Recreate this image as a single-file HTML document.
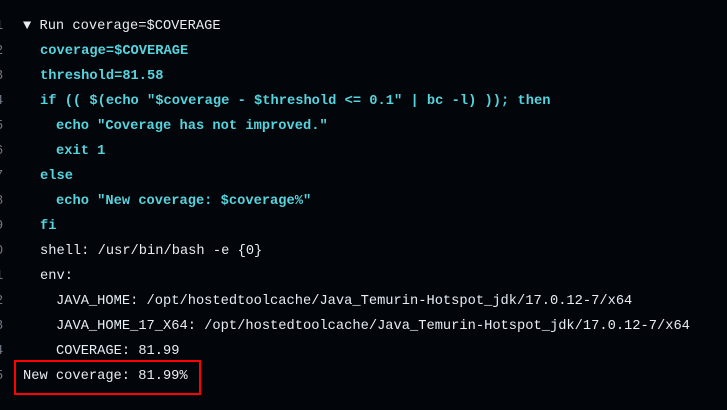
<html><head><style>
body{margin:0;width:727px;height:410px;background:#02050a;overflow:hidden;font-family:"Liberation Mono",monospace;font-size:13.72px;color:#e6edf3;position:relative}
.l{position:absolute;left:0;height:25px;line-height:25px;white-space:pre}
.n{position:absolute;left:-5px;color:#6e7681;width:10px}
.t{position:absolute}
.c{color:#56d4dd;font-weight:bold}
.box{position:absolute;left:14px;top:360px;width:183px;height:31px;border:2px solid #ff0000}
</style></head><body>
<div class="l" style="top:14px"><span class="n">1</span><span class="t" style="left:23px">▼ Run coverage=$COVERAGE</span></div>
<div class="l" style="top:39px"><span class="n">2</span><span class="t c" style="left:40px">coverage=$COVERAGE</span></div>
<div class="l" style="top:64px"><span class="n">3</span><span class="t c" style="left:40px">threshold=81.58</span></div>
<div class="l" style="top:89px"><span class="n">4</span><span class="t c" style="left:40px">if (( $(echo "$coverage - $threshold &lt;= 0.1" | bc -l) )); then</span></div>
<div class="l" style="top:114px"><span class="n">5</span><span class="t c" style="left:56px">echo "Coverage has not improved."</span></div>
<div class="l" style="top:139px"><span class="n">6</span><span class="t c" style="left:56px">exit 1</span></div>
<div class="l" style="top:164px"><span class="n">7</span><span class="t c" style="left:40px">else</span></div>
<div class="l" style="top:189px"><span class="n">8</span><span class="t c" style="left:56px">echo "New coverage: $coverage%"</span></div>
<div class="l" style="top:214px"><span class="n">9</span><span class="t c" style="left:40px">fi</span></div>
<div class="l" style="top:239px"><span class="n">0</span><span class="t" style="left:40px">shell: /usr/bin/bash -e {0}</span></div>
<div class="l" style="top:264px"><span class="n">1</span><span class="t" style="left:40px">env:</span></div>
<div class="l" style="top:289px"><span class="n">2</span><span class="t" style="left:56px">JAVA_HOME: /opt/hostedtoolcache/Java_Temurin-Hotspot_jdk/17.0.12-7/x64</span></div>
<div class="l" style="top:314px"><span class="n">3</span><span class="t" style="left:56px">JAVA_HOME_17_X64: /opt/hostedtoolcache/Java_Temurin-Hotspot_jdk/17.0.12-7/x64</span></div>
<div class="l" style="top:339px"><span class="n">4</span><span class="t" style="left:56px">COVERAGE: 81.99</span></div>
<div class="l" style="top:364px"><span class="n">5</span><span class="t" style="left:23px">New coverage: 81.99%</span></div>
<div class="box"></div>
</body></html>
